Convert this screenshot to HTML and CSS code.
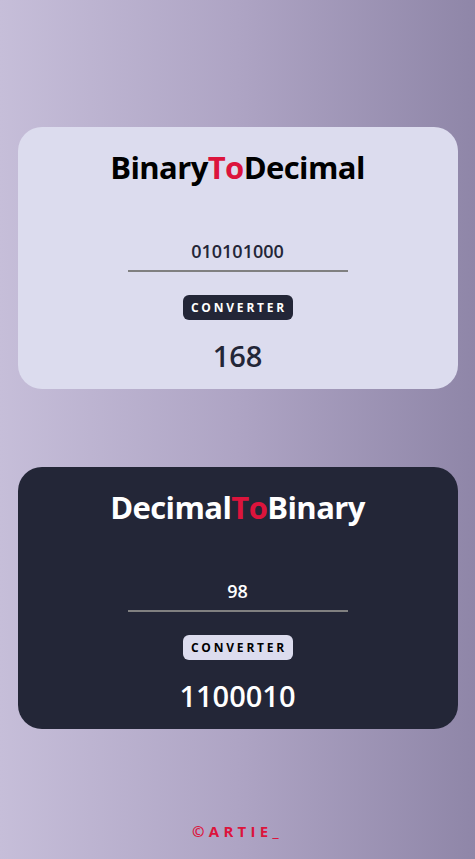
FILE: index.html
```html
<!DOCTYPE html>
<html lang="en">
<head>
<meta charset="utf-8">
<title>Converter</title>
<link rel="stylesheet" href="styles.css">
</head>
<body>
<main class="page">
  <section class="card card-light">
    <h1 class="title">Binary<span class="accent">To</span>Decimal</h1>
    <input class="field" type="text" value="010101000">
    <button class="btn">CONVERTER</button>
    <div class="result">168</div>
  </section>
  <section class="card card-dark">
    <h1 class="title">Decimal<span class="accent">To</span>Binary</h1>
    <input class="field" type="text" value="98">
    <button class="btn">CONVERTER</button>
    <div class="result">1100010</div>
  </section>
  <footer class="footer">©ARTIE_</footer>
</main>
</body>
</html>
```

FILE: styles.css
```css
* { box-sizing: border-box; }
html, body { margin: 0; padding: 0; }
body {
  width: 475px;
  height: 859px;
  overflow: hidden;
  background: linear-gradient(to right, #c6bed9 0%, #aea4c4 50%, #8f86a8 100%);
  font-family: "Open Sans", "Noto Sans", sans-serif;
}
.page {
  display: flex;
  flex-direction: column;
  align-items: center;
  padding: 127px 18px 0;
  height: 859px;
}
.card {
  width: 440px;
  height: 262px;
  border-radius: 24px;
  display: flex;
  flex-direction: column;
  align-items: center;
  padding: 22px 0 16px;
}
.card + .card { margin-top: 78px; }
.card-light { background: #dcdcee; color: #232637; }
.card-dark { background: #232637; color: #ffffff; }
.title {
  margin: 0;
  font-size: 31px;
  line-height: 36px;
  font-weight: 700;
  letter-spacing: -0.6px;
}
.card-light .title { color: #000; }
.accent { color: #dc143c; }
.field {
  margin-top: 52px;
  width: 220px;
  height: 36px;
  border: 0;
  border-bottom: 2px solid #808080;
  background: transparent;
  text-align: center;
  font-family: inherit;
  font-size: 18px;
  font-weight: 600;
  color: inherit;
  padding: 0 0 5px;
  outline: none;
}
.btn {
  margin-top: 23px;
  width: 110px;
  height: 26px;
  border: 0;
  border-radius: 6px;
  font-family: inherit;
  font-size: 12px;
  font-weight: 700;
  letter-spacing: 2.8px;
  padding: 0 0 0 3px;
}
.card-light .btn { background: #232637; color: #fff; }
.card-dark .btn { background: #dcdcee; color: #000; }
.result {
  margin-top: 19px;
  font-size: 29px;
  line-height: 34px;
  font-weight: 600;
}
.footer {
  margin-top: 92px;
  color: #dc143c;
  font-weight: 700;
  font-size: 15px;
  letter-spacing: 4.3px;
  line-height: 20px;
}
```
